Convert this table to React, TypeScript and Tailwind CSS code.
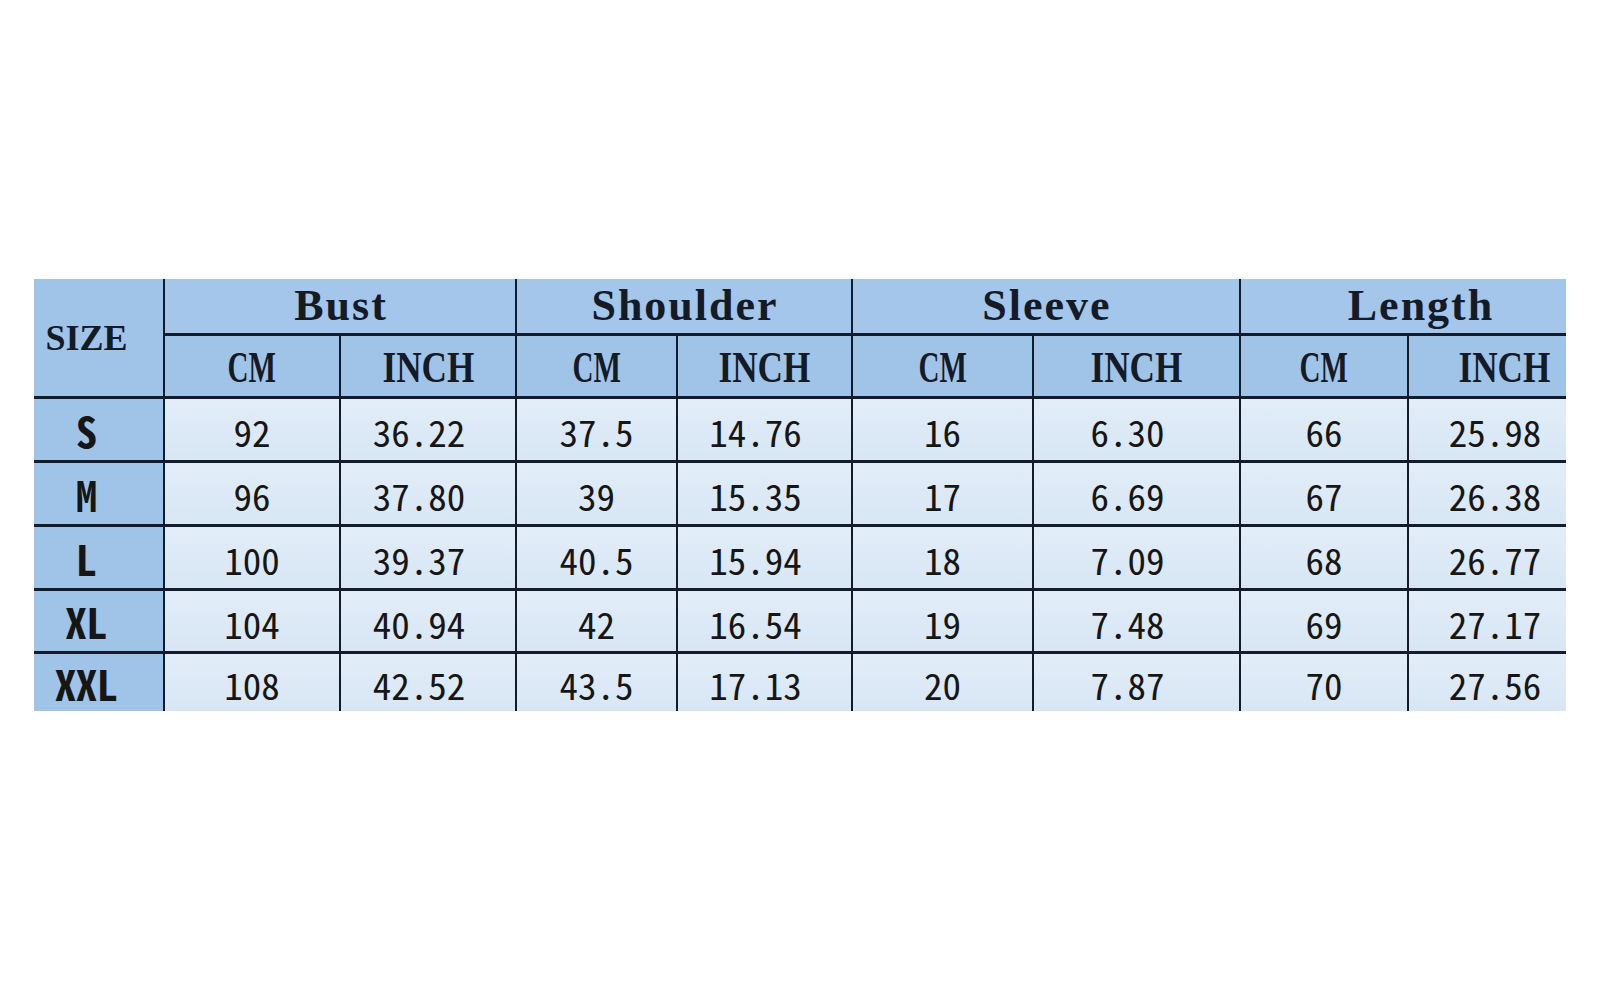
const groups = ["Bust", "Shoulder", "Sleeve", "Length"];

const rows = [
  { size: "S", values: ["92", "36.22", "37.5", "14.76", "16", "6.30", "66", "25.98"] },
  { size: "M", values: ["96", "37.80", "39", "15.35", "17", "6.69", "67", "26.38"] },
  { size: "L", values: ["100", "39.37", "40.5", "15.94", "18", "7.09", "68", "26.77"] },
  { size: "XL", values: ["104", "40.94", "42", "16.54", "19", "7.48", "69", "27.17"] },
  { size: "XXL", values: ["108", "42.52", "43.5", "17.13", "20", "7.87", "70", "27.56"] },
];

const serif = "font-['Liberation_Serif',serif] font-bold text-[#141a26]";
const mono = "font-['Noto_Sans_Mono_CJK_SC','Noto_Sans_CJK_SC','DejaVu_Sans_Mono',monospace] text-[#161616]";

export default function App() {
  return (
    <div className="flex h-screen w-full items-center justify-center bg-white">
      <div className="w-[1532px] overflow-hidden">
        <div className="grid w-max grid-cols-[129px_174px_174px_159px_173px_179px_205px_166px_190px] grid-rows-[54px_60px_61px_61px_61px_60px_57px] gap-x-[2px] gap-y-[3px] bg-[#141c2b]">
          {/* size header */}
          <div className={`row-span-2 flex items-center justify-center bg-[#a0c4e8] pr-6 text-[36px] leading-none ${serif}`}>
            SIZE
          </div>
          {groups.map((g) => (
            <div
              key={g}
              className={`col-span-2 flex items-center justify-center bg-[#a3c6ea] pl-[2px] text-[44px] leading-none tracking-[2px] ${serif}`}
            >
              {g}
            </div>
          ))}
          {groups.map((g) => (
            <>
              <div key={g + "cm"} className={`flex items-center justify-center bg-[#a0c4e8] pt-[4px] text-[44px] leading-none ${serif}`}>
                <span className="inline-block scale-x-66">CM</span>
              </div>
              <div key={g + "in"} className={`flex items-center justify-center bg-[#a0c4e8] pt-[4px] text-[44px] leading-none ${serif}`}>
                <span className="inline-block scale-x-80">INCH</span>
              </div>
            </>
          ))}

          {rows.map((r) => (
            <>
              <div
                key={r.size}
                className={`flex items-center justify-center bg-[#a0c4e8] pr-6 text-[42px] font-bold leading-none ${mono}`}
              >
                {r.size}
              </div>
              {r.values.map((v, i) => (
                <div
                  key={r.size + i}
                  className={`flex items-center justify-center bg-gradient-to-b from-[#e2edf8] to-[#d8e6f4] pt-[4px] text-[37px] leading-none ${mono} ${
                    i % 2 === 1 ? "pr-[18px]" : ""
                  }`}
                >
                  {v}
                </div>
              ))}
            </>
          ))}
        </div>
      </div>
    </div>
  );
}
